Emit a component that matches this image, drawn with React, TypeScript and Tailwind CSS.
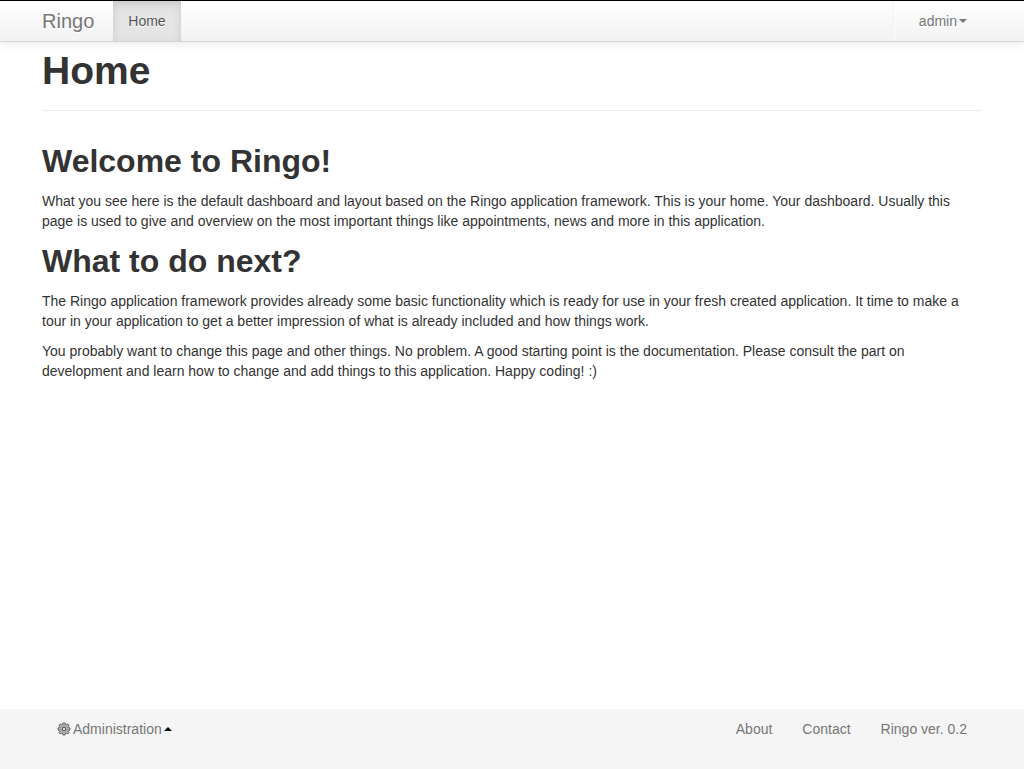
import React from "react";

function GearIcon() {
  return (
    <svg viewBox="0 0 14 14" className="h-3.5 w-3.5 shrink-0" fill="none" aria-hidden="true">
      <path
        d="M6 1h2l.4 1.4 1 .4 1.3-.8 1.4 1.4-.8 1.2.4 1L13 6v2l-1.3.4-.4 1 .8 1.2-1.4 1.4-1.3-.8-1 .4L8 13H6l-.4-1.4-1-.4-1.3.8-1.4-1.4.8-1.2-.4-1L1 8V6l1.3-.4.4-1-.8-1.2L3.3 2l1.3.8 1-.4z"
        fill="#b5b5b5"
        stroke="#555555"
        strokeWidth="0.9"
      />
      <circle cx="7" cy="7" r="3.6" stroke="#9a9a9a" strokeWidth="0.8" />
      <rect x="5.5" y="5.5" width="3" height="3" rx="0.5" fill="#e0e0e0" stroke="#5a5a5a" />
    </svg>
  );
}

export default function App() {
  return (
    <div className="flex min-h-screen flex-col bg-white font-['Liberation_Sans',Arial,sans-serif] text-sm leading-5 text-[#333333]">
      <header className="z-10 border-t border-b border-t-black border-b-[#d4d4d4] bg-linear-to-b from-white to-[#f2f2f2] shadow-[0_1px_10px_rgba(0,0,0,0.1)]">
        <nav className="mx-auto flex h-10 w-full max-w-[940px] justify-between text-[#777777]">
          <div className="flex">
            <a href="#" className="flex items-center pr-[19px] text-xl leading-5 [text-shadow:0_1px_0_#ffffff]">Ringo</a>
            <a href="#" aria-current="page" className="flex items-center bg-[#e5e5e5] px-[15px] text-[#555555] shadow-[inset_0_3px_8px_rgba(0,0,0,0.125)] [text-shadow:0_1px_0_#ffffff]">Home</a>
          </div>
          <div className="flex border-l border-[#f2f2f2]">
            <button type="button" className="flex items-center gap-0.5 border-l border-white pr-[15px] pl-6 [text-shadow:0_1px_0_#ffffff]">
              admin
              <span className="border-x-4 border-t-4 border-x-transparent border-t-[#777777]" />
            </button>
          </div>
        </nav>
      </header>
      <main className="mx-auto w-full max-w-[940px] grow">
        <div className="mb-[30px] border-b border-[#eeeeee] pt-[9px] pb-[19px]">
          <h1 className="text-[39px] leading-10 font-bold">Home</h1>
        </div>
        <h2 className="mb-2.5 text-[32px] leading-10 font-bold">Welcome to Ringo!</h2>
        <p className="mb-2.5">
          What you see here is the default dashboard and layout based on the Ringo application framework. This is your home. Your dashboard. Usually this page is used to give and overview on the most important things like appointments, news and more in this application.
        </p>
        <h2 className="mb-2.5 text-[32px] leading-10 font-bold">What to do next?</h2>
        <p className="mb-2.5">
          The Ringo application framework provides already some basic functionality which is ready for use in your fresh created application. It time to make a tour in your application to get a better impression of what is already included and how things work.
        </p>
        <p className="mb-2.5">
          You probably want to change this page and other things. No problem. A good starting point is the documentation. Please consult the part on development and learn how to change and add things to this application. Happy coding! :)
        </p>
      </main>
      <footer className="bg-[#f5f5f5] pt-2.5 pb-[30px]">
        <div className="mx-auto flex w-full max-w-[940px] justify-between px-[15px] text-[#777777]">
          <button type="button" className="flex items-center gap-0.5">
            <GearIcon />
            Administration
            <span className="border-x-4 border-b-4 border-x-transparent border-b-black" />
          </button>
          <div className="flex gap-[30px]">
            <a href="#">About</a>
            <a href="#">Contact</a>
            <a href="#">Ringo ver. 0.2</a>
          </div>
        </div>
      </footer>
    </div>
  );
}
